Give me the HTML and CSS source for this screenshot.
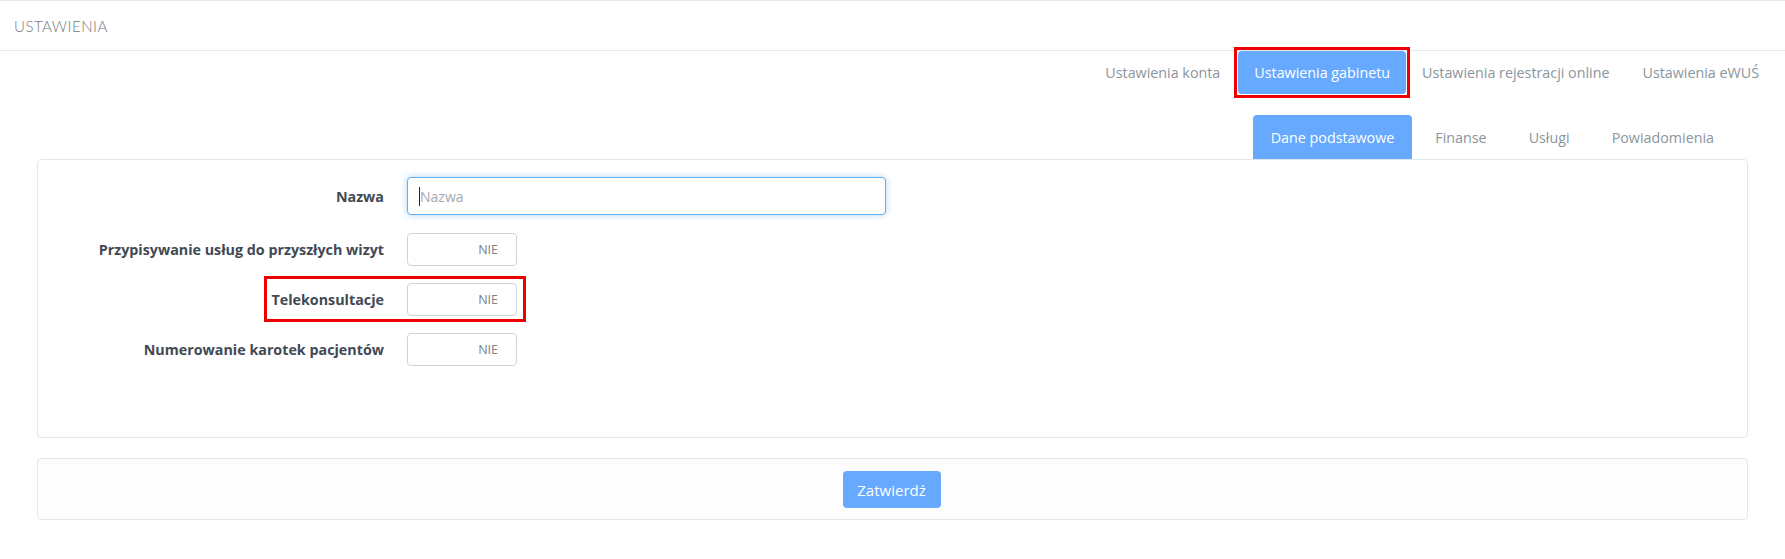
FILE: index.html
```html
<!DOCTYPE html>
<html lang="pl">
<head>
<meta charset="utf-8">
<title>Ustawienia</title>
<link rel="stylesheet" href="styles.css">
</head>
<body>
<header class="page-header">
  <h1 class="page-title">USTAWIENIA</h1>
</header>
<nav class="main-nav">
  <a class="main-nav__item">Ustawienia konta</a>
  <a class="main-nav__item main-nav__item--active">Ustawienia gabinetu</a>
  <a class="main-nav__item">Ustawienia rejestracji online</a>
  <a class="main-nav__item">Ustawienia eWUŚ</a>
</nav>
<div class="content">
  <div class="sub-tabs">
    <a class="sub-tabs__item sub-tabs__item--active">Dane podstawowe</a>
    <a class="sub-tabs__item">Finanse</a>
    <a class="sub-tabs__item">Usługi</a>
    <a class="sub-tabs__item">Powiadomienia</a>
  </div>
  <section class="panel">
    <form class="form">
      <label class="form__label form__label--input">Nazwa</label>
      <div class="form__control form__control--input">
        <input class="text-input text-input--focus" type="text" placeholder="Nazwa">
        <span class="caret"></span>
      </div>
      <label class="form__label">Przypisywanie usług do przyszłych wizyt</label>
      <div class="form__control"><span class="toggle">NIE</span></div>
      <label class="form__label">Telekonsultacje</label>
      <div class="form__control"><span class="toggle">NIE</span></div>
      <label class="form__label">Numerowanie karotek pacjentów</label>
      <div class="form__control"><span class="toggle">NIE</span></div>
      <span class="highlight"></span>
    </form>
  </section>
  <section class="panel panel--footer">
    <button class="btn-primary" type="button">Zatwierdź</button>
  </section>
</div>
</body>
</html>
```

FILE: styles.css
```css
* { box-sizing: border-box; }
html, body { margin: 0; padding: 0; background: #ffffff; }
body {
  font-family: "Open Sans", "Noto Sans", sans-serif;
  font-size: 14px;
  color: #404852;
}
.page-header {
  height: 51px;
  border-top: 1px solid #e3e9f0;
  border-bottom: 1px solid #e3e9f0;
  display: flex;
  align-items: center;
  padding-left: 14px;
}
.page-title {
  margin: 0;
  font-family: "Lato", "Open Sans", sans-serif;
  font-weight: 300;
  font-size: 15px;
  letter-spacing: 0.5px;
  color: #75797d;
}
.main-nav {
  display: flex;
  justify-content: flex-end;
  padding-right: 10px;
  height: 43px;
}
.main-nav__item {
  position: relative;
  display: flex;
  align-items: center;
  padding: 0 16px;
  height: 43px;
  color: #8b959e;
  font-size: 14.3px;
}
.main-nav__item:first-child { margin-right: 2px; }
.main-nav__item:last-child { margin-left: 1px; }
.main-nav__item--active {
  background: #66a9ff;
  color: #ffffff;
  border-radius: 4px;
}
.main-nav__item--active::after {
  content: "";
  position: absolute;
  left: -4px;
  right: -4px;
  top: -4px;
  bottom: -4px;
  border: 3px solid #ee0000;
  pointer-events: none;
}
.content {
  padding: 21px 37px 0 37px;
}
.sub-tabs {
  display: flex;
  justify-content: flex-end;
  padding-right: 13px;
  height: 44px;
}
.sub-tabs__item {
  display: flex;
  align-items: center;
  padding: 0 21px;
  color: #8b959e;
  font-size: 14.3px;
}
.sub-tabs__item--active {
  padding: 0 18px;
  margin-right: 2px;
  background: #66a9ff;
  color: #ffffff;
  border-radius: 4px 4px 0 0;
}
.panel {
  border: 1px solid #e1e7ef;
  border-radius: 4px;
  background: #ffffff;
}
.form {
  position: relative;
  display: grid;
  grid-template-columns: 346px 479px;
  column-gap: 23px;
  row-gap: 17px;
  align-items: center;
  padding: 17px 0 71px 0;
}
.form__label {
  text-align: right;
  font-weight: 700;
  font-size: 14.3px;
  color: #414953;
}
.form__control--input { position: relative; margin-bottom: 1px; }
.text-input {
  display: block;
  width: 479px;
  height: 38px;
  border: 1px solid #66afe9;
  border-radius: 4px;
  padding: 0 12px;
  font-family: "Open Sans", sans-serif;
  font-size: 14px;
  color: #555;
  outline: none;
}
.text-input::placeholder { color: #a4a8ac; }
.text-input--focus {
  box-shadow: 0 0 6px rgba(102, 175, 233, 0.55);
}
.caret {
  position: absolute;
  left: 12px;
  top: 10px;
  width: 1px;
  height: 19px;
  background: #222;
}
.toggle {
  display: flex;
  align-items: center;
  justify-content: flex-end;
  width: 110px;
  height: 33px;
  padding-right: 18px;
  border: 1px solid #cfd3d7;
  border-radius: 4px;
  font-size: 12.5px;
  color: #7c8187;
}
.highlight {
  position: absolute;
  left: 226px;
  top: 116px;
  width: 262px;
  height: 46px;
  border: 3px solid #ee0000;
  pointer-events: none;
}
.panel--footer {
  margin-top: 20px;
  background: #fdfdfd;
  display: flex;
  justify-content: center;
  padding: 12px 0 11px 0;
}
.btn-primary {
  width: 98px;
  height: 37px;
  border: 0;
  border-radius: 4px;
  background: #66a9ff;
  color: #ffffff;
  font-family: "Open Sans", sans-serif;
  font-size: 15px;
  padding: 0;
  margin-right: 2px;
}
```
